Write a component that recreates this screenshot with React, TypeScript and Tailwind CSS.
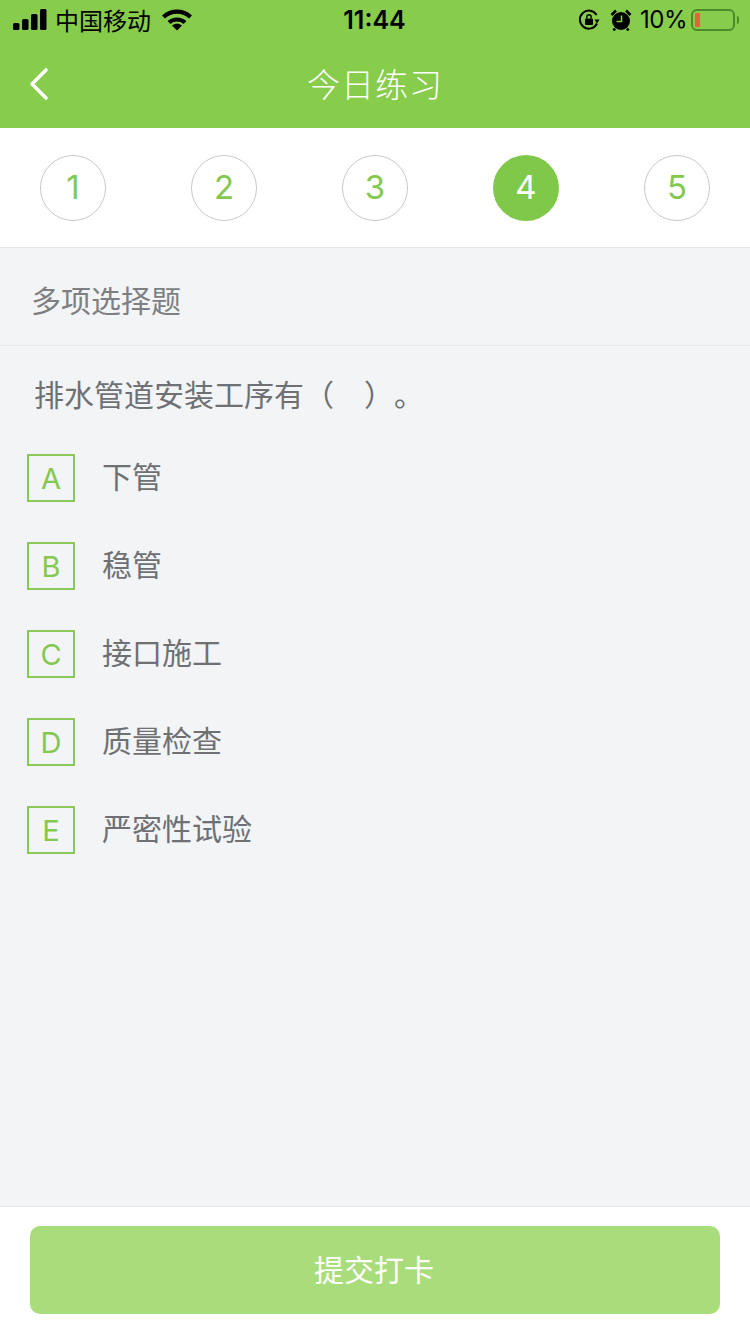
const steps = [1, 2, 3, 4, 5];
const active = 4;

const options = [
  { key: 'A', text: '下管' },
  { key: 'B', text: '稳管' },
  { key: 'C', text: '接口施工' },
  { key: 'D', text: '质量检查' },
  { key: 'E', text: '严密性试验' },
];

const cjk = "font-['Noto_Sans_CJK_SC',sans-serif]";

function StatusBar() {
  return (
    <div className="flex h-10 items-center justify-between pl-[13px] pr-[11px] text-black">
      <div className="flex w-[260px] items-center">
        {/* signal bars */}
        <svg width="34" height="22" viewBox="0 0 34 22" fill="#000">
          <rect x="0" y="14" width="6.5" height="7" rx="1.5" />
          <rect x="9" y="10" width="6.5" height="11" rx="1.5" />
          <rect x="18" y="5" width="6.5" height="16" rx="1.5" />
          <rect x="27" y="0" width="6.5" height="21" rx="1.5" />
        </svg>
        <span className="ml-[8px] text-[24px] leading-none">中国移动</span>
        <svg className="ml-[11px]" width="30" height="22" viewBox="0 0 30 22" fill="none" stroke="#000" strokeWidth="4.2">
          <path d="M1.5 8C9 0.8 21 0.8 28.5 8" />
          <path d="M7 13.5C11.5 9.5 18.5 9.5 23 13.5" />
          <path d="M15 21.5L10 16.5C13 14.2 17 14.2 20 16.5Z" fill="#000" stroke="none" />
        </svg>
      </div>
      <span className="mr-[3px] font-['Inter',sans-serif] text-[25px] font-semibold leading-none">11:44</span>
      <div className="flex w-[260px] items-center justify-end">
        {/* rotation lock */}
        <svg width="22" height="22" viewBox="0 0 22 22" fill="none">
          <path d="M19 14.5A9 9 0 1 1 18.6 6" stroke="#000" strokeWidth="2" />
          <path d="M21.5 10.5L16.5 10.5L19 14.5Z" fill="#000" />
          <rect x="7" y="9.5" width="8" height="6.5" rx="1" fill="#000" />
          <path d="M8.8 9.5V8a2.2 2.2 0 0 1 4.4 0v1.5" stroke="#000" strokeWidth="1.4" />
        </svg>
        {/* alarm clock */}
        <svg className="ml-[10px]" width="22" height="22" viewBox="0 0 22 22" fill="none">
          <circle cx="11" cy="12" r="9" fill="#000" />
          <path d="M1.5 6L6 1.5M16 1.5L20.5 6M5 19.5L3.5 21.5M17 19.5L18.5 21.5" stroke="#000" strokeWidth="2.6" />
          <path d="M11.5 6.5V12.5H6.5" stroke="#87cc4b" strokeWidth="1.6" />
        </svg>
        <span className="ml-[8px] font-['Inter',sans-serif] text-[24px] leading-none tracking-[-0.5px]">10%</span>
        {/* battery */}
        <div className="ml-[4px] flex h-[22px] w-[44px] items-center rounded-[6px] border-2 border-[#4e8a2c] pl-[2px]">
          <div className="h-[14px] w-[5px] rounded-[1px] bg-[#e4633a]" />
        </div>
        <div className="ml-[2px] h-[8px] w-[2px] rounded-r-full bg-[#4e8a2c]" />
      </div>
    </div>
  );
}

function NavBar() {
  return (
    <div className="relative flex h-[88px] items-center justify-center pb-[1px]">
      <svg className="absolute left-[28px] top-[27px]" width="22" height="34" viewBox="0 0 22 34" fill="none" stroke="#fff" strokeWidth="3.6" strokeLinecap="round" strokeLinejoin="round">
        <path d="M18 3L4 17L18 31" />
      </svg>
      <span className="text-[33px] font-light leading-none tracking-[1px] text-white">今日练习</span>
    </div>
  );
}

export default function App() {
  return (
    <div className={`flex h-[1334px] w-[750px] flex-col overflow-hidden bg-[#f2f4f6] ${cjk}`}>
      <div className="bg-[#87cc4b]">
        <StatusBar />
        <NavBar />
      </div>

      <div className="flex h-[120px] items-start justify-between border-b border-[#e6e6e6] bg-white px-[40px] pt-[27px]">
        {steps.map((n) =>
          n === active ? (
            <div key={n} className="flex h-[66px] w-[66px] items-center justify-center rounded-full bg-[#7fc84a] font-['Inter',sans-serif] text-[33px] text-white">
              {n}
            </div>
          ) : (
            <div key={n} className="flex h-[66px] w-[66px] items-center justify-center rounded-full border border-[#c9c9c9] font-['Inter',sans-serif] text-[33px] text-[#84c850]">
              {n}
            </div>
          ),
        )}
      </div>

      <div className="flex h-[98px] items-center border-b border-[#e6e8ea] pl-[31px] pt-[4px] text-[30px] leading-none text-[#7d7f82]">
        多项选择题
      </div>

      <div className="pl-[34px] pt-[27px] text-[30px] leading-[40px] text-[#6e7073] [text-spacing-trim:space-all]">排水管道安装工序有（　）。</div>

      <div className="mt-[41px] flex flex-col gap-[40px] pl-[27px]">
        {options.map((o) => (
          <div key={o.key} className="flex items-center">
            <div className="flex h-[48px] w-[48px] items-center justify-center border-2 border-[#8ac85a] pt-[2px] font-['Inter',sans-serif] text-[29px] text-[#84c850]">
              {o.key}
            </div>
            <span className="mb-[7px] ml-[27px] text-[30px] leading-none text-[#6e7073]">{o.text}</span>
          </div>
        ))}
      </div>

      <div className="mt-auto flex h-[128px] items-start border-t border-[#e6e8ea] bg-white px-[30px] pt-[19px]">
        <button className="flex h-[88px] w-full items-center justify-center rounded-[10px] bg-[#a9dc7a] pb-[4px] pr-[2px] text-[30px] text-white">
          提交打卡
        </button>
      </div>
    </div>
  );
}
